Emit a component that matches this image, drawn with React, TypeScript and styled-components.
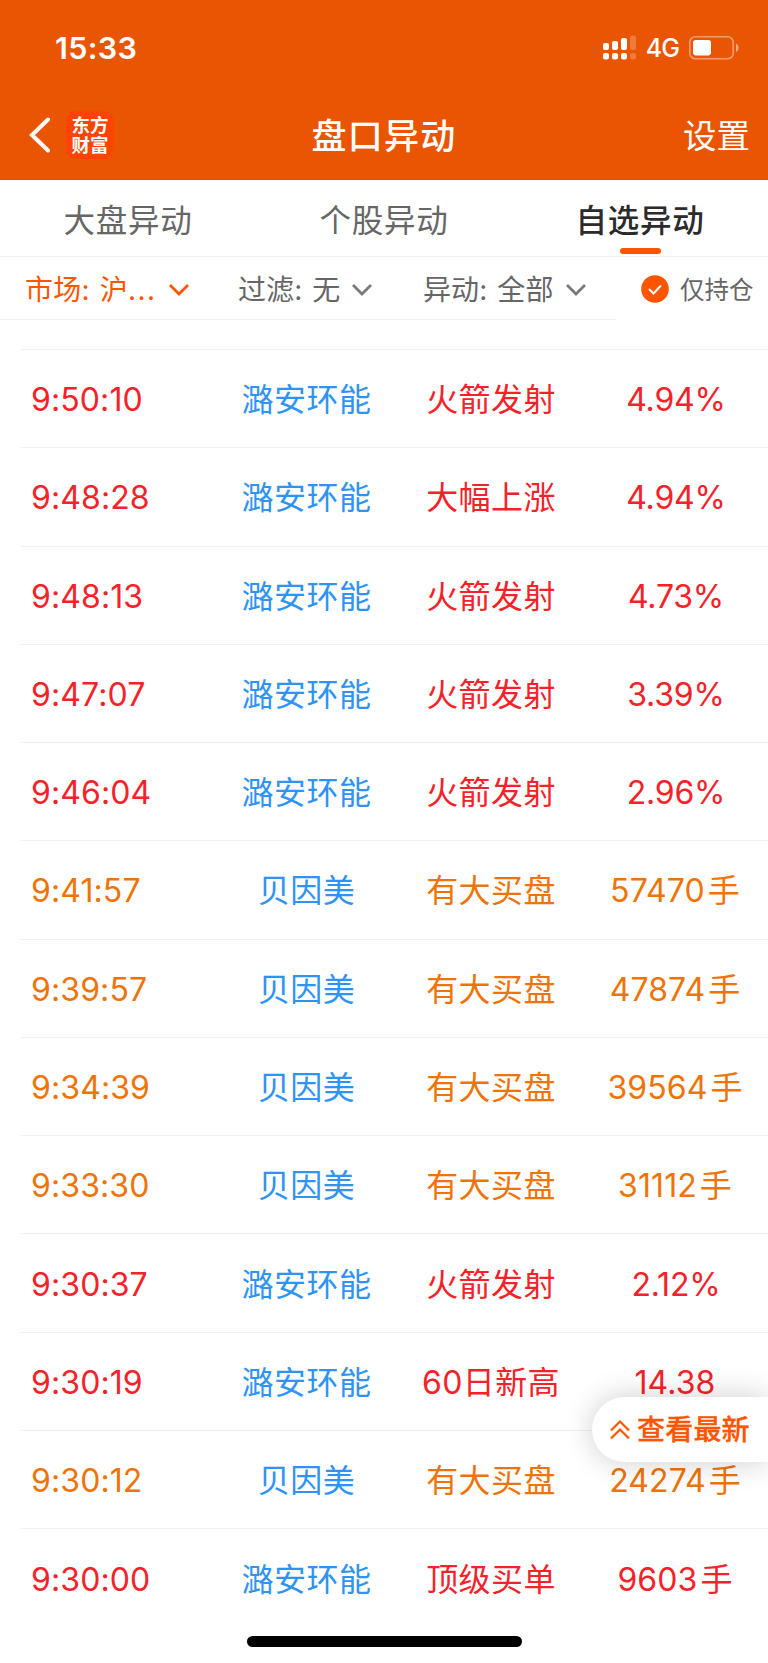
import React from 'react';
import styled, { createGlobalStyle } from 'styled-components';

const GlobalStyle = createGlobalStyle`
  * { box-sizing: border-box; }
  body {
    margin: 0;
    background: #fff;
    font-family: Inter, "Noto Sans CJK SC", sans-serif;
  }
`;

const ACCENT = '#ff5500';

const Screen = styled.main`
  position: relative;
  width: 768px;
  height: 1663px;
  overflow: hidden;
  display: flex;
  flex-direction: column;
  background: #fff;
`;

const Header = styled.header`
  height: 180px;
  flex: none;
  background: #ea5504;
  color: #fff;
`;

const StatusBar = styled.div`
  height: 92px;
  display: flex;
  align-items: center;
  justify-content: space-between;
  padding: 2px 29px 0 55px;
`;

const Clock = styled.span`
  font-size: 30.5px;
  font-weight: 600;
  letter-spacing: 0.3px;
`;

const StatusIcons = styled.div`
  display: flex;
  align-items: center;
  padding-top: 1px;
`;

const Network = styled.span`
  font-size: 25px;
  font-weight: 500;
  letter-spacing: -0.9px;
  margin: 1px 10px 0 10px;
`;

const NavBar = styled.div`
  height: 88px;
  display: grid;
  grid-template-columns: 200px 1fr 200px;
  align-items: center;
`;

const NavLeft = styled.div`
  display: flex;
  align-items: center;
  gap: 15px;
  padding: 0 0 2px 29px;
`;

const Logo = styled.div`
  width: 48px;
  height: 48px;
  border-radius: 10px;
  background: #ff4400;
  display: flex;
  flex-direction: column;
  align-items: center;
  justify-content: center;
  font-size: 18.5px;
  font-weight: 700;
  line-height: 20px;
  padding-bottom: 1px;
`;

const Title = styled.h1`
  margin: 0;
  text-align: center;
  font-size: 35px;
  line-height: 50px;
  font-weight: 500;
  letter-spacing: 1.3px;
`;

const Settings = styled.span`
  text-align: right;
  padding-right: 18px;
  font-size: 33.5px;
  line-height: 50px;
`;

const Tabs = styled.nav`
  height: 77px;
  flex: none;
  display: grid;
  grid-template-columns: repeat(3, 1fr);
  border-bottom: 1px solid #f1f1f1;
`;

const Tab = styled.div<{ $active?: boolean }>`
  position: relative;
  height: 76px;
  text-align: center;
  font-size: 31.5px;
  line-height: 81px;
  letter-spacing: 0.7px;
  color: ${(p) => (p.$active ? '#2b2b2b' : '#666')};
  font-weight: ${(p) => (p.$active ? 500 : 400)};
  &::after {
    content: '';
    display: ${(p) => (p.$active ? 'block' : 'none')};
    position: absolute;
    left: 108px;
    bottom: 2px;
    width: 41px;
    height: 6px;
    border-radius: 3px;
    background: ${ACCENT};
  }
`;

const FilterBar = styled.div`
  height: 63px;
  flex: none;
  display: flex;
`;

const Filters = styled.div`
  width: 616px;
  display: grid;
  grid-template-columns: 238px 185px 1fr;
  align-items: center;
  border-bottom: 1px solid #f1f1f1;
`;

const Filter = styled.div<{ $active?: boolean }>`
  display: flex;
  align-items: center;
  gap: 12px;
  padding-top: 4px;
  padding-left: ${(p) => (p.$active ? 25 : 0)}px;
  font-size: 28px;
  line-height: 40px;
  letter-spacing: ${(p) => (p.$active ? 0.2 : 0.1)}px;
  word-spacing: 2px;
  white-space: pre;
  color: ${(p) => (p.$active ? ACCENT : '#666')};
  stroke: ${(p) => (p.$active ? ACCENT : '#7a7a7a')};
`;

const Ellipsis = styled.span`
  letter-spacing: 1.5px;
`;

const HoldingOnly = styled.div`
  display: flex;
  align-items: center;
  gap: 11px;
  padding: 2px 0 0 25px;
  font-size: 24.5px;
  line-height: 36px;
  color: #666;
  svg { margin-bottom: 1px; }
`;

const List = styled.section`
  margin-top: 29px;
  margin-left: 21px;
  border-top: 1px solid #f1f1f1;
`;

const Row = styled.div<{ $color: string }>`
  height: 98.27px;
  display: grid;
  grid-template-columns: 192px 187px 182px 186px;
  align-items: center;
  padding-top: 3px;
  text-align: center;
  font-size: 32px;
  line-height: 46px;
  color: ${(p) => p.$color};
  border-bottom: 1px solid #f1f1f1;
  &:last-child { border-bottom: none; }
`;

const Time = styled.span`
  text-align: left;
  padding-left: 10px;
  letter-spacing: 0.1px;
`;

const Stock = styled.span`
  color: #2f93f3;
  letter-spacing: 0.4px;
`;

const EventName = styled.span`
  letter-spacing: 0.4px;
`;

const Value = styled.span<{ $percent: boolean }>`
  padding-left: ${(p) => (p.$percent ? 2 : 0)}px;
  letter-spacing: ${(p) => (p.$percent ? -0.2 : 0.1)}px;
`;

const Unit = styled.span`
  margin-left: 3px;
`;

const Latest = styled.div`
  position: absolute;
  right: 0;
  top: 1397px;
  width: 176px;
  height: 65px;
  border-radius: 33px 0 0 33px;
  background: #fff;
  box-shadow: 0 0 30px rgba(0, 0, 0, 0.2);
  display: flex;
  align-items: center;
  gap: 7px;
  padding: 1px 0 0 18px;
  color: ${ACCENT};
  font-size: 28px;
  line-height: 40px;
  font-weight: 500;
  letter-spacing: 0.2px;
  -webkit-text-stroke: 0.3px ${ACCENT};
`;

const HomeIndicator = styled.div`
  position: absolute;
  left: 247px;
  top: 1636px;
  width: 275px;
  height: 11px;
  border-radius: 6px;
  background: #000;
`;

const Signal = () => (
  <svg width="33" height="25" viewBox="0 0 33 25" fill="#fff">
    {[8, 6, 3, 0.5].map((y, i) => (
      <g key={i} opacity={i === 3 ? 0.22 : 1}>
        <rect x={i * 9} y={y} width="6" height={15 - y} rx="2" />
        <rect x={i * 9} y="18" width="6" height="6.5" rx="2" />
      </g>
    ))}
  </svg>
);

const Battery = () => (
  <svg width="50" height="24" viewBox="0 0 50 24" fill="#fff">
    <rect x="0.8" y="0.8" width="43.4" height="22" rx="5.6" fill="none" stroke="#fff" strokeOpacity="0.42" strokeWidth="1.6" />
    <rect x="4" y="4" width="18" height="15.4" rx="2.8" />
    <path d="M47 7.5c3.4 1.8 3.4 6.8 0 8.6z" opacity="0.5" />
  </svg>
);

const Chevron = () => (
  <svg width="20" height="12" viewBox="0 0 20 12" fill="none" strokeWidth="2.8">
    <path d="M1 1l9 9 9-9" />
  </svg>
);

const RED = '#f5222a';
const ORANGE = '#ef7408';

const rows: [string, string, string, string, string][] = [
  ['9:50:10', '潞安环能', '火箭发射', '4.94%', RED],
  ['9:48:28', '潞安环能', '大幅上涨', '4.94%', RED],
  ['9:48:13', '潞安环能', '火箭发射', '4.73%', RED],
  ['9:47:07', '潞安环能', '火箭发射', '3.39%', RED],
  ['9:46:04', '潞安环能', '火箭发射', '2.96%', RED],
  ['9:41:57', '贝因美', '有大买盘', '57470手', ORANGE],
  ['9:39:57', '贝因美', '有大买盘', '47874手', ORANGE],
  ['9:34:39', '贝因美', '有大买盘', '39564手', ORANGE],
  ['9:33:30', '贝因美', '有大买盘', '31112手', ORANGE],
  ['9:30:37', '潞安环能', '火箭发射', '2.12%', RED],
  ['9:30:19', '潞安环能', '60日新高', '14.38', RED],
  ['9:30:12', '贝因美', '有大买盘', '24274手', ORANGE],
  ['9:30:00', '潞安环能', '顶级买单', '9603手', RED],
];

export default function App() {
  return (
    <Screen>
      <GlobalStyle />
      <Header>
        <StatusBar>
          <Clock>15:33</Clock>
          <StatusIcons>
            <Signal />
            <Network>4G</Network>
            <Battery />
          </StatusIcons>
        </StatusBar>
        <NavBar>
          <NavLeft>
            <svg width="22" height="36" viewBox="0 0 22 36" fill="none" stroke="#fff" strokeWidth="4" strokeLinecap="round">
              <path d="M19 2.5L3 18l16 15.5" />
            </svg>
            <Logo>
              <span>东方</span>
              <span>财富</span>
            </Logo>
          </NavLeft>
          <Title>盘口异动</Title>
          <Settings>设置</Settings>
        </NavBar>
      </Header>
      <Tabs>
        <Tab>大盘异动</Tab>
        <Tab>个股异动</Tab>
        <Tab $active>自选异动</Tab>
      </Tabs>
      <FilterBar>
        <Filters>
          <Filter $active>
            <span>市场: 沪<Ellipsis>...</Ellipsis></span>
            <Chevron />
          </Filter>
          <Filter>过滤: 无<Chevron /></Filter>
          <Filter>异动: 全部<Chevron /></Filter>
        </Filters>
        <HoldingOnly>
          <svg width="28" height="28" viewBox="0 0 28 28" fill="none">
            <circle cx="14" cy="14" r="13.8" fill={ACCENT} />
            <path d="M8.5 14.5l4 4 7-7.5" stroke="#fff" strokeWidth="2" strokeLinecap="round" />
          </svg>
          <span>仅持仓</span>
        </HoldingOnly>
      </FilterBar>
      <List>
        {rows.map(([time, stock, event, value, color]) => (
          <Row key={time} $color={color}>
            <Time>{time}</Time>
            <Stock>{stock}</Stock>
            <EventName>{event}</EventName>
            <Value $percent={value.endsWith('%')}>
              {value.replace('手', '')}
              {value.endsWith('手') && <Unit>手</Unit>}
            </Value>
          </Row>
        ))}
      </List>
      <Latest>
        <svg width="20" height="20" viewBox="0 0 20 20" fill="none" stroke={ACCENT} strokeWidth="2.2">
          <path d="M1 10.5l9-9 9 9M1 18.5l9-9 9 9" />
        </svg>
        查看最新
      </Latest>
      <HomeIndicator />
    </Screen>
  );
}
